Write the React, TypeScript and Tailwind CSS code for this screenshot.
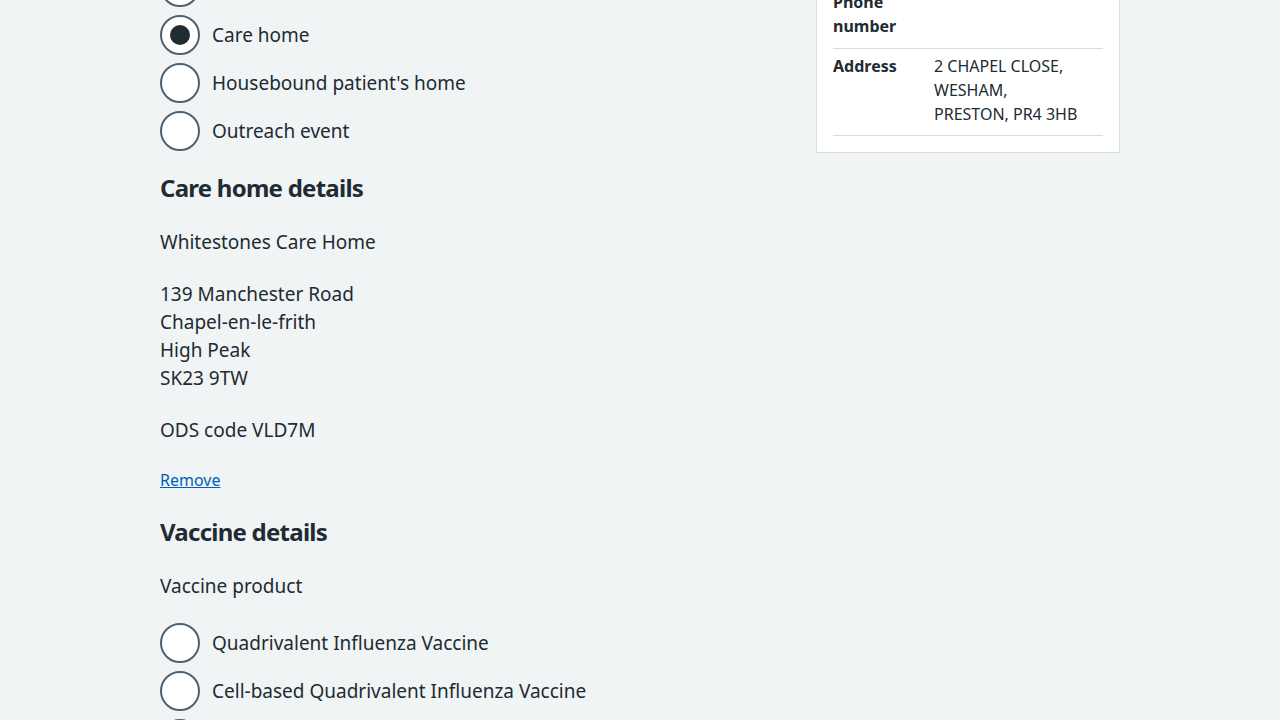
const FONT = "font-['Noto_Sans','Lato',sans-serif]";

const LOCATIONS = [
  { label: 'GP surgery', checked: false },
  { label: 'Care home', checked: true },
  { label: "Housebound patient's home", checked: false },
  { label: 'Outreach event', checked: false },
];

const VACCINES = [
  { label: 'Quadrivalent Influenza Vaccine', checked: false },
  { label: 'Cell-based Quadrivalent Influenza Vaccine', checked: false },
  { label: 'Adjuvanted Trivalent Influenza Vaccine', checked: false },
];

function Radio({ label, checked }: { label: string; checked: boolean }) {
  return (
    <div className="flex items-center gap-3 h-10">
      <span className="w-10 h-10 rounded-full border-2 border-[#4c6272] bg-white flex items-center justify-center shrink-0">
        {checked && <span className="w-5 h-5 rounded-full bg-[#212b32]" />}
      </span>
      <span className="text-[19px] leading-7">{label}</span>
    </div>
  );
}

export default function App() {
  return (
    <div className={`min-h-screen bg-[#f0f4f5] text-[#212b32] ${FONT}`}>
      <div className="max-w-[960px] mx-auto -mt-[33px] grid grid-cols-[624px_304px] gap-8">
        {/* Form */}
        <div>
          <div className="flex flex-col gap-2">
            {LOCATIONS.map((r, i) => (
              <Radio key={i} {...r} />
            ))}
          </div>

          <h2 className="mt-[21px] mb-6 text-[24px] leading-8 font-bold tracking-[-0.75px]">
            Care home details
          </h2>
          <p className="text-[19px] leading-7 mb-6">Whitestones Care Home</p>
          <p className="text-[19px] leading-7 mb-6">
            139 Manchester Road
            <br />
            Chapel-en-le-frith
            <br />
            High Peak
            <br />
            SK23 9TW
          </p>
          <p className="text-[19px] leading-7 mb-6">ODS code VLD7M</p>
          <a href="#" className="block text-base leading-6 text-[#005eb8] underline mb-6">
            Remove
          </a>

          <h2 className="mb-6 text-[24px] leading-8 font-bold tracking-[-0.75px]">Vaccine details</h2>
          <p className="text-[19px] leading-7 mb-[23px]">Vaccine product</p>
          <div className="flex flex-col gap-2">
            {VACCINES.map((r, i) => (
              <Radio key={i} {...r} />
            ))}
          </div>
        </div>

        {/* Patient summary card */}
        <div className="self-start bg-white border border-[#d8dde0] px-4 pb-4 pt-[17px]">
          <dl className="text-base leading-6">
            <div className="flex border-b border-[#d8dde0] pt-[5px] pb-[10px]">
              <dt className="w-[101px] shrink-0 font-bold">
                Phone
                <br />
                number
              </dt>
              <dd></dd>
            </div>
            <div className="flex border-b border-[#d8dde0] pt-[5px] pb-[9px]">
              <dt className="w-[101px] shrink-0 font-bold">Address</dt>
              <dd>
                2 CHAPEL CLOSE,
                <br />
                WESHAM,
                <br />
                PRESTON, PR4 3HB
              </dd>
            </div>
          </dl>
        </div>
      </div>
    </div>
  );
}
